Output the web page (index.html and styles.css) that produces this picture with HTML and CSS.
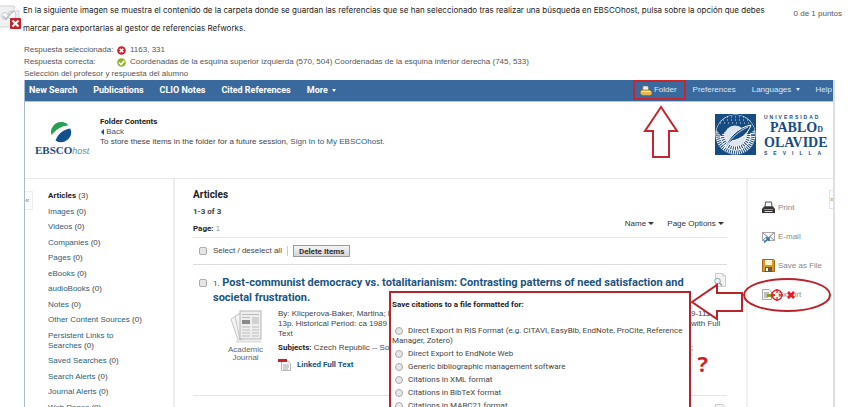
FILE: index.html
```html
<!DOCTYPE html>
<html lang="es">
<head>
  <meta charset="UTF-8" />
  <meta name="viewport" content="width=device-width, initial-scale=1.0" />
  <title>Revisar entrega de examen</title>
  <link rel="stylesheet" href="styles.css">
</head>
<body>

  <div class="question">
    <svg class="status" width="21" height="27" viewBox="0 0 21 27" aria-hidden="true">
      <path d="M-3 1H14L19 6V22H-3Z" fill="#f1f1f1" stroke="#d0d3d6"/>
      <path d="M14 1V6H19" fill="#fff" stroke="#d0d3d6"/>
      <circle cx="5" cy="11" r="3.500" fill="#fafafa" stroke="#c3cbd0"/>
      <circle cx="12" cy="10" r="4" fill="#fafafa" stroke="#c3cbd0"/>
      <path d="M3 11L6 14L13 6" fill="none" stroke="#b3bfc6" stroke-width="1.500"/>
      <rect x="10" y="13" width="11" height="11" rx="1" fill="#c4232b"/>
      <path d="M12.500 15.500L18.500 21.500M18.500 15.500L12.500 21.500" stroke="#fff" stroke-width="2.200"/>
    </svg>
    <p class="statement">En la siguiente imagen se muestra el contenido de la carpeta donde se guardan las referencias que se han seleccionado tras realizar una búsqueda en EBSCOhost, pulsa sobre la opción que debes marcar para exportarlas al gestor de referencias Refworks.</p>
    <span class="score">0 de 1 puntos</span>
  </div>

  <div class="answers">
    <div class="answer">
      <span class="answer-label">Respuesta seleccionada:</span>
      <svg width="9" height="9" viewBox="0 0 9 9"><circle cx="4.500" cy="4.500" r="4.300" fill="#cf2030"/><path d="M2.700 2.700L6.300 6.300M6.300 2.700L2.700 6.300" stroke="#fff" stroke-width="1.600"/></svg>
      <span>1163, 331</span>
    </div>
    <div class="answer">
      <span class="answer-label">Respuesta correcta:</span>
      <svg width="9" height="9" viewBox="0 0 9 9"><circle cx="4.500" cy="4.500" r="4.300" fill="#8fb02c"/><path d="M2 4.500L4 6.500L7.300 2.700" fill="none" stroke="#fff" stroke-width="1.600"/></svg>
      <span>Coordenadas de la esquina superior izquierda (570, 504) Coordenadas de la esquina inferior derecha (745, 533)</span>
    </div>
    <div>Selección del profesor y respuesta del alumno</div>
  </div>

  <div class="frame">
    <nav class="topnav">
      <div class="nav-main">
        <a href="#">New Search</a>
        <a href="#">Publications</a>
        <a href="#">CLIO Notes</a>
        <a href="#">Cited References</a>
        <a href="#">More <i class="caret"></i></a>
      </div>
      <div class="nav-user">
        <div class="folder">
          <a href="#"><svg width="12" height="11" viewBox="0 0 12 11"><path d="M3 1H8L9 6H2.500Z" fill="#f4f1e4" stroke="#70695a" stroke-width=".6"/><path d="M1 5H10L12 7V9L10.500 10.500H2L0 8Z" fill="#e5b94d" stroke="#806323" stroke-width=".6"/><path d="M1.500 6.500H10.500" stroke="#fff0a8"/></svg> Folder</a>
          <svg class="arrow-up" width="36" height="54" viewBox="0 0 36 54"><path d="M18 2L34 26H26V52H10V26H2Z" fill="#fff" stroke="#c1272d" stroke-width="2"/></svg>
        </div>
        <a href="#">Preferences</a>
        <a href="#">Languages <i class="caret"></i></a>
        <a href="#">Help</a>
      </div>
    </nav>

    <header class="header">
      <div class="ebsco">
        <svg width="22" height="22" viewBox="0 0 22 22"><path d="M1.500 14A10 10 0 0 1 18.500 4.300C11 5 6 9 1.500 14Z" fill="#28a052"/><path d="M20.300 7.500A10 10 0 0 1 5.500 19.500C8 13 13 8.500 20.300 7.500Z" fill="#10508f"/></svg>
        <div><b>EBSCO</b><em>host</em></div>
      </div>
      <div class="intro">
        <h1>Folder Contents</h1>
        <p><i class="caret back"></i> <a href="#">Back</a></p>
        <p>To store these items in the folder for a future session, <a href="#">Sign In to My EBSCOhost.</a></p>
      </div>
      <div class="upo">
        <svg width="41" height="41" viewBox="0 0 41 41">
          <rect width="41" height="41" fill="#174c83"/>
          <circle cx="20.500" cy="20.500" r="20" fill="#fff"/>
          <path d="M1.500 16A19.500 19.500 0 0 1 39.500 16L34 20C30 12 12 13 6 22Z" fill="#174c83"/>
          <g fill="none" stroke="#174c83">
            <circle cx="20.500" cy="21" r="17.500" stroke-width="4" stroke-dasharray="1 1"/>
            <circle cx="20.500" cy="21" r="13" stroke-width="3.500" stroke-dasharray="1 1.200"/>
            <path d="M5 9H36M8 6H33M12 3H29" stroke="#fff" stroke-width=".8" stroke-dasharray="1 3"/>
          </g>
          <circle cx="20" cy="22" r="10.500" fill="#dce6f0"/>
          <path d="M9 35C14 23 22 14 36 11C33 20 26 25 17 27C14 29 11 32 9 35Z" fill="#174c83" stroke="#fff"/>
          <path d="M11 32C17 23 24 17 33 13" fill="none" stroke="#fff" stroke-width=".8"/>
        </svg>
        <div class="upo-name">
          <span class="tracked">UNIVERSIDAD</span>
          <b class="indent">PABLO<small>D</small></b>
          <b>OLAVIDE</b>
          <span class="tracked wide">SEVILLA</span>
        </div>
      </div>
    </header>

    <div class="columns">
      <aside class="sidebar">
        <a class="collapse" href="#">«</a>
        <ul>
          <li><b>Articles</b> (3)</li>
          <li><a href="#">Images</a> (0)</li>
          <li><a href="#">Videos</a> (0)</li>
          <li><a href="#">Companies</a> (0)</li>
          <li><a href="#">Pages</a> (0)</li>
          <li><a href="#">eBooks</a> (0)</li>
          <li><a href="#">audioBooks</a> (0)</li>
          <li><a href="#">Notes</a> (0)</li>
          <li><a href="#">Other Content Sources</a> (0)</li>
          <li><a href="#">Persistent Links to<br>Searches</a> (0)</li>
          <li><a href="#">Saved Searches</a> (0)</li>
          <li><a href="#">Search Alerts</a> (0)</li>
          <li><a href="#">Journal Alerts</a> (0)</li>
          <li><a href="#">Web Pages</a> (0)</li>
        </ul>
      </aside>

      <main class="results">
        <div class="results-head">
          <div>
            <h2>Articles</h2>
            <p class="count">1-3 of 3</p>
            <p><b>Page:</b> <span class="current">1</span></p>
          </div>
          <div class="sorting">
            <a href="#">Name <i class="caret"></i></a>
            <a href="#">Page Options <i class="caret"></i></a>
          </div>
        </div>

        <div class="bulk">
          <input type="checkbox" id="all"><label for="all">Select / deselect all</label>
          <button type="button">Delete Items</button>
        </div>

        <article class="result">
          <input type="checkbox" aria-label="1">
          <div class="result-body">
            <h3><span>1.</span> <a href="#">Post-communist democracy vs. totalitarianism: Contrasting patterns of need satisfaction and societal frustration.</a></h3>
            <div class="record">
              <div class="pubtype">
                <svg width="32" height="33" viewBox="0 0 32 33">
                  <path d="M1 9L9 4L16 26L8 30Z" fill="#f3f3f3" stroke="#c8c8c8"/>
                  <path d="M5 6L11 3L18 27L10 30Z" fill="#f3f3f3" stroke="#c8c8c8"/>
                  <rect x="10" y="1" width="21" height="28" fill="#eee" stroke="#b5b5b5"/>
                  <path d="M12 4.500H29M12 7.500H20M12 17H20M12 20H20M12 23H20M12 26H20M22 17H29M22 20H29M22 23H29M22 26H29" stroke="#bcbcbc"/>
                  <rect x="12" y="10" width="8" height="4" fill="#8a8a8a"/><rect x="22" y="7" width="7" height="7" fill="#d2d2d2"/>
                  <path d="M6 31.500H31" stroke="#ddd" stroke-width="2"/>
                </svg>
                Academic Journal
              </div>
              <div class="details">
                <div class="line"><span>By: Klicperova-Baker, Martina; K</span><span>9-111.</span></div>
                <div class="line"><span>13p. Historical Period: ca 1989</span><span>with Full</span></div>
                <div class="line"><span>Text</span></div>
                <div class="line subjects"><span><b>Subjects:</b> Czech Republic -- So</span><span>;</span></div>
                <a class="fulltext" href="#"><svg width="13" height="13" viewBox="0 0 13 13"><path d="M3.500 2.500H9L12.500 5.500V12.500H3.500Z" fill="#f7f7f7" stroke="#b8b8b8"/><path d="M5 7H11M5 9H11M5 11H10" stroke="#aaa"/><rect width="9" height="3" y="1" fill="#c6202b"/></svg> Linked Full Text</a>
              </div>
            </div>
          </div>
          <svg class="preview" width="14" height="15" viewBox="0 0 14 15"><path d="M2.500 .5H10L12.500 3V13.500H2.500Z" fill="#f2f2f2" stroke="#ccc"/><path d="M10 .5V3H12.500" fill="none" stroke="#ccc"/><circle cx="4.500" cy="8" r="2.800" fill="#eaf5fa" stroke="#8fa9b5"/><path d="M6.500 10L9 12.500" stroke="#999" stroke-width="1.500"/></svg>
        </article>
        <article class="result">
          <input type="checkbox" aria-label="2">
          <div class="result-body"></div>
          <svg class="preview" width="14" height="15" viewBox="0 0 14 15"><path d="M2.500 .5H10L12.500 3V13.500H2.500Z" fill="#f2f2f2" stroke="#ccc"/></svg>
        </article>

        <form class="export-box">
          <h4>Save citations to a file formatted for:</h4>
          <label><input type="radio" name="format"> Direct Export in RIS Format (e.g. CITAVI, EasyBib, EndNote, ProCite, Reference Manager, Zotero)</label>
          <label><input type="radio" name="format"> Direct Export to EndNote Web</label>
          <label><input type="radio" name="format"> Generic bibliographic management software</label>
          <label><input type="radio" name="format"> Citations in XML format</label>
          <label><input type="radio" name="format"> Citations in BibTeX format</label>
          <label><input type="radio" name="format"> Citations in MARC21 format</label>
        </form>
        <span class="doubt">?</span>
      </main>

      <aside class="tools">
        <a class="expand" href="#">»</a>
        <a href="#"><svg width="13" height="13" viewBox="0 0 13 13"><path d="M3.500 1H9.500L10 6H3Z" fill="#f5f5f5" stroke="#555"/><path d="M2 5.500H11L13 8V12H0V8Z" fill="#333"/><path d="M2 8.500H11" stroke="#999"/><path d="M2.500 10.500H10.500" stroke="#ddd"/></svg>Print</a>
        <a href="#"><svg width="13" height="13" viewBox="0 0 13 13"><path d="M.5 2.500H12.500V10.500H.5Z" fill="#f7f7f7" stroke="#aaa"/><path d="M.5 2.500L6.500 7.500L12.500 2.500M.5 10.500L5 6.500M12.500 10.500L8 6.500" fill="none" stroke="#888"/><path d="M2 12.500L7 8M4 8H7V11" fill="none" stroke="#2a79a8" stroke-width="1.600"/></svg>E-mail</a>
        <a href="#"><svg width="13" height="13" viewBox="0 0 13 13"><path d="M.5 .5H11.500L12.500 1.500V12.500H.5Z" fill="#d59a2b" stroke="#9b6814"/><rect x="3" y="1" width="7" height="5" fill="#fff3d0"/><rect x="3" y="8" width="7" height="5" fill="#6d5638"/><rect x="4" y="9" width="2" height="3" fill="#fff"/></svg>Save as File</a>
        <a class="export" href="#"><svg width="13" height="13" viewBox="0 0 13 13"><path d="M.5 1.500H7L9.500 4V11.500H.5Z" fill="#f6f6f6" stroke="#aaa"/><path d="M2 5H7M2 7H6M2 9H6" stroke="#888"/><path d="M5 6H9V4L13 7.500L9 11V9H5Z" fill="#8c9c21"/></svg>Export
          <svg class="circled" width="142" height="64" viewBox="0 0 142 64">
            <path d="M2 40L27 23V31H52V49H27V57Z" fill="#fff" stroke="#b8242b" stroke-width="2"/>
            <ellipse cx="97" cy="33" rx="43" ry="16" fill="none" stroke="#b8242b" stroke-width="2"/>
            <circle cx="87" cy="33" r="5" fill="none" stroke="#f01820" stroke-width="1.300"/>
            <path d="M87 27V31M87 35V39M81 33H85M89 33H93" stroke="#f01820" stroke-width="1.300"/>
            <path d="M98 30L104 36M104 30L98 36" stroke="#f01820" stroke-width="2.600"/>
          </svg>
        </a>
      </aside>
    </div>
  </div>

</body>
</html>
```
FILE: styles.css
```css
* { box-sizing: border-box; }
body { font: 8px/10px "Liberation Sans", Arial, sans-serif; color: #444; background: #fff; margin: 0; height: 100vh; overflow: hidden; }
h1, h2, h3, h4, p, ul { margin: 0; padding: 0; font-size: 8px; }
h1, h2, h3, h4, b, button, .nav-main, .count, .fulltext { font-family: Roboto, Arial, sans-serif; font-weight: bold; }
a { color: #2b6079; text-decoration: none; }
svg { flex: none; }
input { appearance: none; width: 8px; height: 8px; margin: 0; border: 1px solid #aaa; background: #e6e6e6; border-radius: 2px; flex: none; }
input[type="radio"] { border-radius: 50%; }

.question { display: flex; color: #222; padding-top: 1px; }
.status { margin: 4px 2px 0 0; }
.statement { flex: 1; font: 8px/18px Inter, Arial, sans-serif; max-width: 755px; }
.score { margin: 8px 6px 0 auto; color: #555; }

.answers { margin-left: 24px; padding-top: 7px; line-height: 12px; color: #555; }
.answer { display: flex; align-items: center; gap: 4px; }
.answer-label { width: 89px; white-space: nowrap; }

.frame { margin: 0 13px 0 24px; border-left: 1px solid #a9bccb; border-right: 2px solid #dcdfe3; }
.topnav { display: flex; justify-content: space-between; align-items: center; height: 22px; padding-bottom: 1px; background: #3a6a9d; border-bottom: 1px solid #e3c069; }
.topnav a { color: #fff; }
.nav-main { display: flex; gap: 16px; padding-left: 4px; font-size: 9px; }
.nav-user { display: flex; align-items: center; gap: 16px; padding-right: 1px; }
.nav-user a { color: #dfe8f1; }
.caret { display: inline-block; border: 2px solid transparent; border-top: 3px solid; border-bottom: 0; margin: 0 0 1px 2px; }
.sorting .caret { border-width: 3px 3px 0; margin-left: 0; }
.caret.back { border: 3px solid transparent; border-right: 3px solid #10508f; border-left: 0; margin: 0 0 -1px 1px; }
.folder { position: relative; border: 2px solid #c9252c; height: 20px; padding: 0 7px 0 5px; margin-right: -9px; }
.folder a { display: flex; align-items: center; gap: 2px; height: 16px; }
.arrow-up { position: absolute; top: 23px; left: 8px; }

.header { display: flex; height: 77px; padding: 12px 7px 0 10px; border-bottom: 1px solid #e8e8e8; }
.ebsco { width: 65px; padding-top: 7px; }
.ebsco svg { display: block; margin-left: 15px; }
.ebsco b { font: bold 11px/15px "Liberation Serif", serif; color: #234d7d; }
.ebsco em { color: #5b9290; font-size: 9px; }
.intro { padding-top: 3px; flex: 1; }
.intro h1 { color: #222; }
.upo { display: flex; gap: 8px; color: #174c83; }
.upo-name { display: flex; flex-direction: column; width: 62px; }
.upo-name b { font: bold 14px/13px "Liberation Serif", serif; }
.upo-name .indent { padding-left: 6px; }
.upo-name small { font-size: 8px; }
.tracked { font: bold 5px/7px "Liberation Sans", sans-serif; letter-spacing: 2px; }
.tracked.wide { letter-spacing: 6px; line-height: 8px; }

.columns { display: flex; }
.sidebar { display: flex; width: 150px; padding-top: 12px; border-right: 2px solid #eee; }
.collapse { width: 8px; height: 19px; border: 1px solid #eee; border-left: 0; line-height: 17px; color: #888; }
.sidebar ul { list-style: none; padding-left: 15px; }
.sidebar li { margin-bottom: 6px; }
.sidebar li:nth-child(even) { margin-bottom: 5px; }
.sidebar b { color: #222; }

.results { position: relative; flex: 1; padding: 10px 19px 0 18px; }
.results-head { display: flex; justify-content: space-between; align-items: flex-end; padding-bottom: 3px; border-bottom: 1px solid #e6e6e6; }
.results-head h2 { font-size: 10px; line-height: 12px; color: #222; }
.count { padding: 6px 0 7px; }
.results-head b { color: #222; }
.current { color: #999; }
.sorting { display: flex; gap: 13px; padding: 0 3px 5px 0; }
.sorting a { color: #333; }
.bulk { display: flex; align-items: center; height: 27px; padding-left: 6px; border-bottom: 1px solid #ddd; }
.bulk label { padding: 0 5px 0 6px; border-right: 1px solid #ccc; }
.bulk button { font-size: 8px; line-height: 9px; color: #333; margin-left: 5px; padding: 0 5px; border: 1px solid #999; background: linear-gradient(#f5f5f5, #d5d5d5); height: 12px; }

.result { display: flex; align-items: flex-start; height: 131px; padding: 8px 0 0 6px; border-bottom: 1px solid #e3e3e3; }
.result input { margin: 6px 6px 0 0; }
.result-body { flex: 1; padding-top: 3px; }
.result h3 { font-size: 11px; line-height: 14px; }
.result h3 span { font-size: 8px; font-weight: normal; }
.result h3 a { color: #1b5480; }
.record { display: flex; padding-top: 4px; }
.pubtype { display: flex; flex-direction: column; align-items: center; width: 65px; padding: 1px 12px 0; text-align: center; line-height: 8px; color: #666; }
.pubtype svg { margin-bottom: 3px; }
.details { flex: 1; }
.line { display: flex; justify-content: space-between; }
.line span + span { width: 22px; white-space: nowrap; }
.subjects { padding-top: 4px; }
.subjects b { color: #222; }
.fulltext { display: flex; align-items: center; gap: 6px; padding-top: 5px; color: #1b5480; }

.export-box { position: absolute; top: 112px; right: 55px; width: 302px; height: 130px; padding: 7px 0 0 1px; border: 2px solid #b8242b; background: #fff; font-family: Roboto, Arial, sans-serif; }
.export-box h4 { color: #222; margin-bottom: 16px; }
.export-box label { display: block; margin-bottom: 3px; }
.export-box input { vertical-align: middle; margin: 0 3px; }
.doubt { position: absolute; right: 38px; top: 173px; font: bold 22px/22px "Open Sans", sans-serif; color: #d01f26; }

.tools { position: relative; width: 87px; padding: 20px 0 0 14px; border-left: 2px solid #f0f0f0; }
.tools a { display: flex; align-items: center; gap: 3px; height: 17px; margin-bottom: 12px; color: #888; }
.tools .expand { position: absolute; right: 0; top: 11px; width: 4px; height: 19px; overflow: hidden; border: 1px solid #e3e3e3; border-right: 0; }
.export { position: relative; }
.circled { position: absolute; left: -72px; top: -24px; }
```
